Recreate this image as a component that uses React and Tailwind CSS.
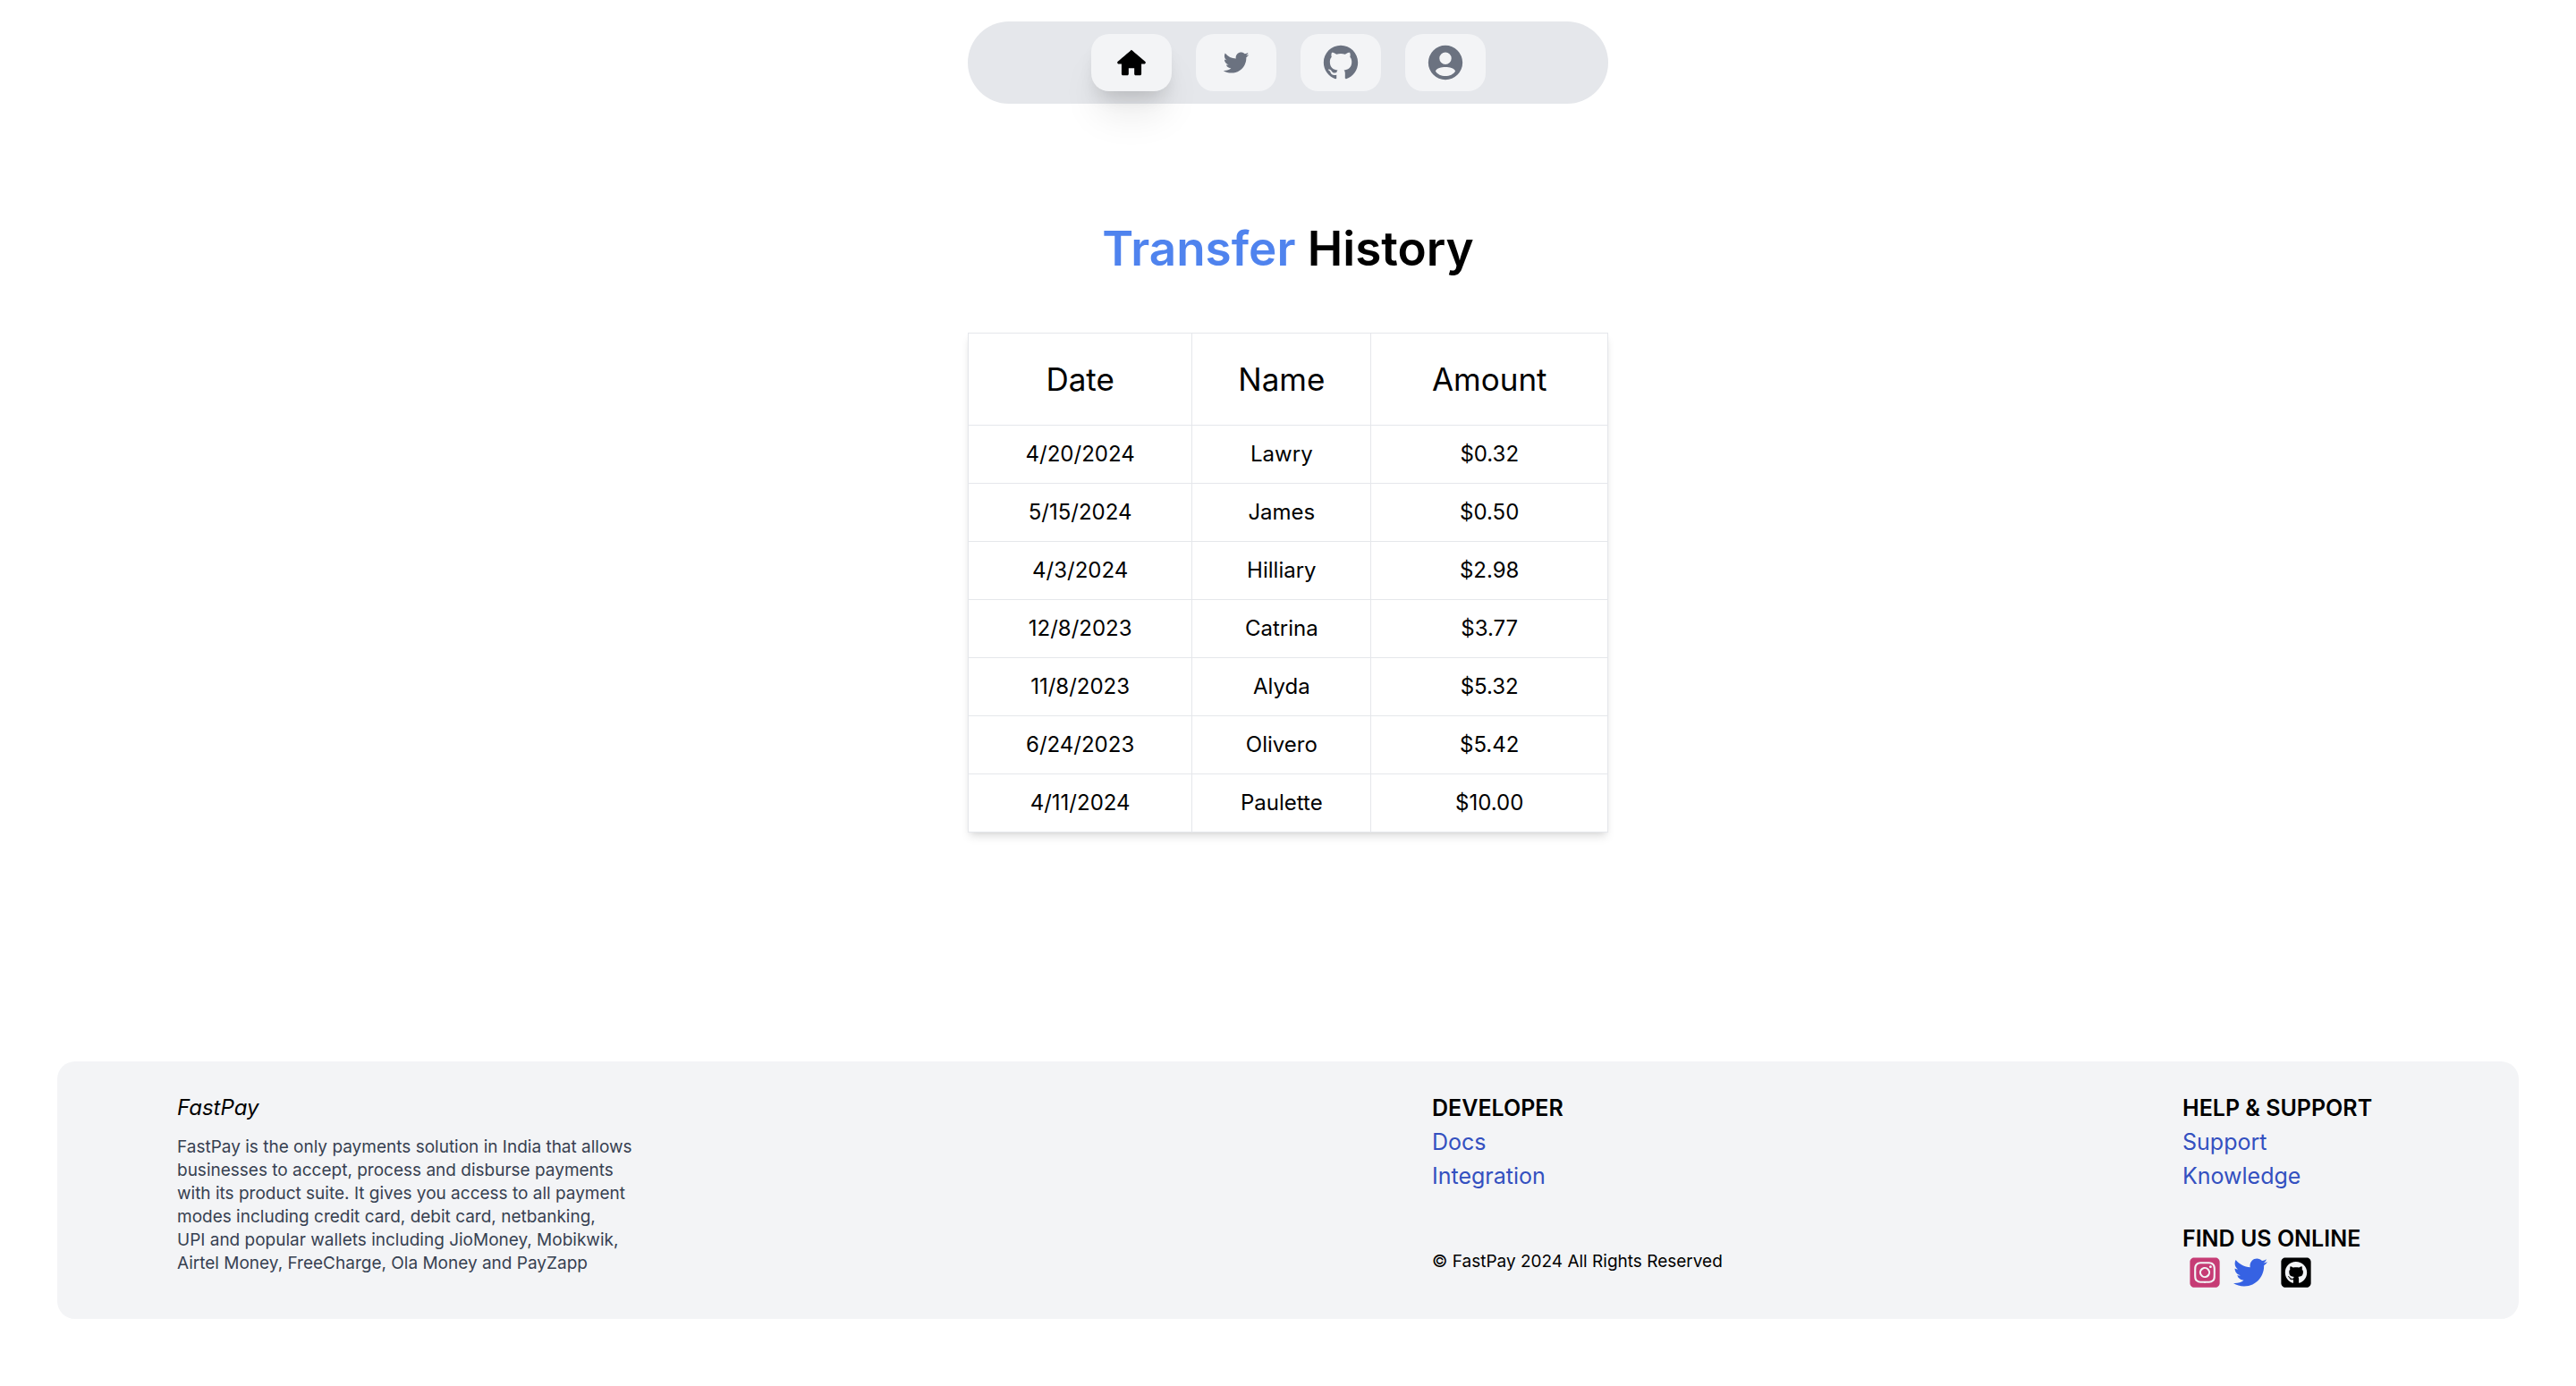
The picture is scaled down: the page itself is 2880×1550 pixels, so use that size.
import { FaSquareGithub, FaSquareInstagram, FaTwitter } from "react-icons/fa6";
import { RiGithubFill } from "react-icons/ri";
import { TiHome, TiSocialTwitter } from "react-icons/ti";

function AccountIcon({ className }) {
  return (
    <svg viewBox="0 0 24 24" fill="currentColor" fillRule="evenodd" className={className} aria-hidden="true">
      <path d="M12 2a10 10 0 1 0 0 20 10 10 0 0 0 0-20Zm0 4a3.5 3.5 0 1 1 0 7 3.5 3.5 0 0 1 0-7Zm-5.8 10.900c.9-1.700 3.300-2.300 5.800-2.300s4.900.6 5.800 2.300c-1.100 1.900-3.300 2.900-5.800 2.900s-4.700-1-5.800-2.900Z" />
    </svg>
  );
}

const navItems = [
  { label: "Home", Icon: TiHome, size: "size-[38px]", active: true },
  { label: "Twitter", Icon: TiSocialTwitter, size: "size-[38px]" },
  { label: "GitHub", Icon: RiGithubFill, size: "size-[46px]" },
  { label: "Account", Icon: AccountIcon, size: "size-[46px]" },
];

const transfers = [
  ["4/20/2024", "Lawry", "$0.32"],
  ["5/15/2024", "James", "$0.50"],
  ["4/3/2024", "Hilliary", "$2.98"],
  ["12/8/2023", "Catrina", "$3.77"],
  ["11/8/2023", "Alyda", "$5.32"],
  ["6/24/2023", "Olivero", "$5.42"],
  ["4/11/2024", "Paulette", "$10.00"],
];

const columns = [
  { title: "Date", width: "w-[35%]" },
  { title: "Name", width: "w-[28%]" },
  { title: "Amount", width: "w-[37%]" },
];

function NavBar() {
  return (
    <nav className="mt-6 flex w-[716px] max-w-full justify-center gap-[27px] rounded-full bg-[#e5e7eb] py-3.5">
      {navItems.map(({ label, Icon, size, active }) => (
        <a
          key={label}
          href="#"
          aria-label={label}
          className={
            active
              ? "flex h-16 w-[90px] items-center justify-center rounded-[20px] bg-[#f3f4f6] text-black shadow-[0_33px_41px_-6px_rgb(0_0_0/0.08),0_13px_20px_-8px_rgb(0_0_0/0.15)]"
              : "flex h-16 w-[90px] items-center justify-center rounded-[20px] bg-[#f3f4f6] text-[#6b7280]"
          }
        >
          <Icon className={size} />
        </a>
      ))}
    </nav>
  );
}

function TransferTable() {
  return (
    <table className="mt-[62px] w-[716px] max-w-full table-fixed border-collapse text-center text-[24px] shadow-[0_7px_10px_-2px_rgb(0_0_0/0.1),0_3px_7px_-3px_rgb(0_0_0/0.1)]">
      <thead>
        <tr>
          {columns.map(({ title, width }) => (
            <th key={title} scope="col" className={`${width} h-[103px] border border-[#e5e7eb] text-[35px] font-normal`}>
              {title}
            </th>
          ))}
        </tr>
      </thead>
      <tbody>
        {transfers.map((row) => (
          <tr key={row[0]}>
            {row.map((cell) => (
              <td key={cell} className="h-[65px] border border-[#e5e7eb]">
                {cell}
              </td>
            ))}
          </tr>
        ))}
      </tbody>
    </table>
  );
}

function Footer() {
  return (
    <footer className="mx-16 mt-64 grid grid-cols-[1403fr_839fr_242fr] self-stretch rounded-[20px] bg-[#f3f4f6] px-[134px] py-[33px] text-[25px] leading-[38px] whitespace-nowrap">
      <section>
        <h2 className="text-[24px] italic">FastPay</h2>
        <p className="mt-3 text-[19px] leading-[26px] text-[#374151]">
          FastPay is the only payments solution in India that allows
          <br />
          businesses to accept, process and disburse payments
          <br />
          with its product suite. It gives you access to all payment
          <br />
          modes including credit card, debit card, netbanking,
          <br />
          UPI and popular wallets including JioMoney, Mobikwik,
          <br />
          Airtel Money, FreeCharge, Ola Money and PayZapp
        </p>
      </section>
      <section className="flex flex-col items-start">
        <h2 className="font-semibold">DEVELOPER</h2>
        <a href="#" className="text-[#3350c0]">Docs</a>
        <a href="#" className="text-[#3350c0]">Integration</a>
        <p className="mt-16 text-[19px] leading-[26px]">© FastPay 2024 All Rights Reserved</p>
      </section>
      <section className="flex flex-col items-start">
        <h2 className="font-semibold">HELP &amp; SUPPORT</h2>
        <a href="#" className="text-[#3350c0]">Support</a>
        <a href="#" className="text-[#3350c0]">Knowledge</a>
        <h2 className="mt-8 font-semibold">FIND US ONLINE</h2>
        <div className="flex gap-[13px] pl-1.5">
          <a href="#" aria-label="Instagram"><FaSquareInstagram className="size-[38px] text-[#c63c75]" /></a>
          <a href="#" aria-label="Twitter"><FaTwitter className="size-[38px] text-[#3662e3]" /></a>
          <a href="#" aria-label="GitHub"><FaSquareGithub className="size-[38px] text-black" /></a>
        </div>
      </section>
    </footer>
  );
}

export default function App() {
  return (
    <div className="flex min-h-screen flex-col items-center overflow-hidden bg-white font-['Inter',sans-serif] text-black">
      <NavBar />
      <h1 className="mt-[130px] text-[53px] leading-[64px] font-semibold">
        <span className="text-[#4f83ee]">Transfer</span> History
      </h1>
      <TransferTable />
      <Footer />
    </div>
  );
}
